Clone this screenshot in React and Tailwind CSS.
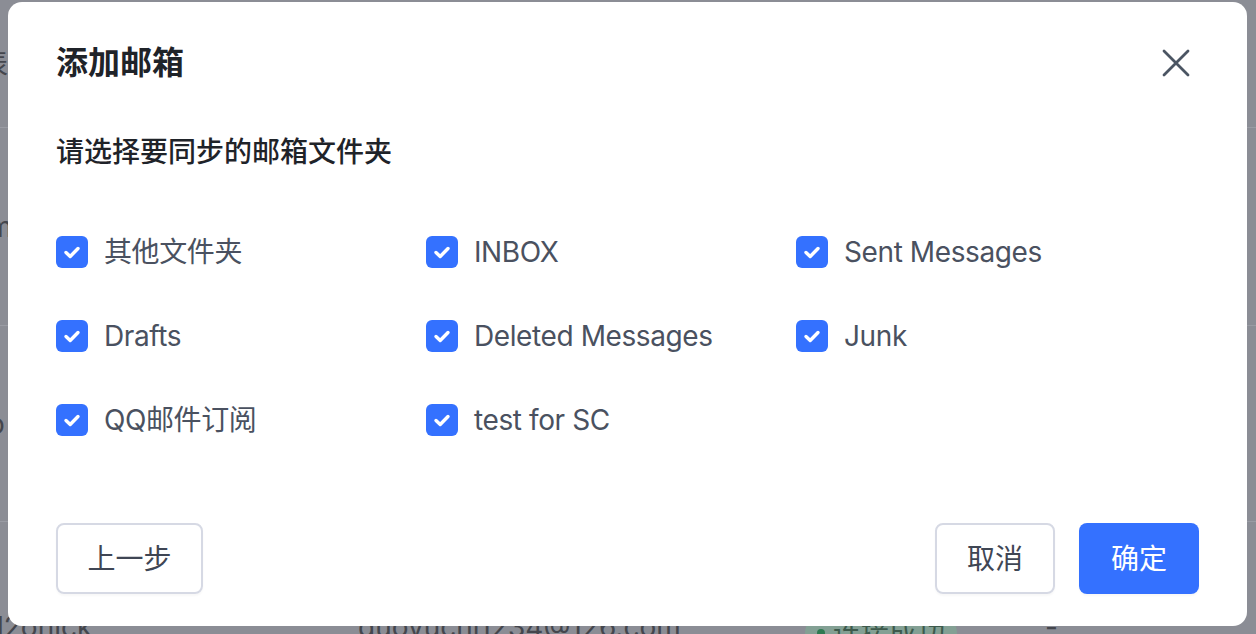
import React from "react";

const folders = [
  "其他文件夹",
  "INBOX",
  "Sent Messages",
  "Drafts",
  "Deleted Messages",
  "Junk",
  "QQ邮件订阅",
  "test for SC",
];

function Check() {
  return (
    <span className="w-8 h-8 rounded-[6px] bg-[#3471ff] flex items-center justify-center shrink-0">
      <svg width="32" height="32" viewBox="0 0 32 32" fill="none">
        <path d="M10 16.5l4.2 4L22 12.5" stroke="white" strokeWidth="3.4" strokeLinecap="round" strokeLinejoin="round" />
      </svg>
    </span>
  );
}

function BackgroundTable() {
  return (
    <div className="flex flex-col text-[28px] text-[#44464d]">
      <div className="h-[128px] border-b border-[#9a9ca4] flex items-center">
        <span className="-ml-[20px]">表</span>
      </div>
      <div className="h-[198px] border-b border-[#9a9ca4] flex items-center">
        <span className="-ml-[12px]">m</span>
      </div>
      <div className="h-[196px] border-b border-[#9a9ca4] flex items-center">
        <span className="-ml-[12px]">o</span>
      </div>
      <div className="h-[196px] flex items-start pt-[84px]">
        <span className="-ml-[3px] w-[361px]">l2onick</span>
        <span className="w-[447px]">guovuchi1234@126.com</span>
        <span className="w-[240px]">
          <span className="inline-flex items-center gap-2 px-3 h-[40px] rounded-full bg-[#83a094] text-[#3d5a4c]">
            <span className="w-2 h-2 rounded-full bg-[#2f7a52]" />
            连接成功
          </span>
        </span>
        <span>-</span>
      </div>
    </div>
  );
}

export default function App() {
  return (
    <div
      className="relative w-[1256px] h-[634px] overflow-hidden bg-[#8b8d95]"
      style={{ fontFamily: "Inter, 'Noto Sans CJK SC', sans-serif" }}
    >
      <BackgroundTable />

      <div className="absolute left-[8px] top-[2px] w-[1239px] h-[624px] bg-white rounded-[14px] px-12 flex flex-col">
        <div className="pt-[45px] flex items-center justify-between h-[77px]">
          <h1 className="text-[32px] leading-[32px] font-bold text-[#1f2329]">添加邮箱</h1>
          <button className="w-8 h-8 mr-[7px] flex items-center justify-center text-[#4b5563]">
            <svg width="28" height="28" viewBox="0 0 28 28" fill="none">
              <path d="M2 2L26 26M26 2L2 26" stroke="currentColor" strokeWidth="2.8" strokeLinecap="round" />
            </svg>
          </button>
        </div>

        <p className="mt-[53px] h-[40px] leading-[40px] text-[28px] font-medium text-[#1f2329]">
          请选择要同步的邮箱文件夹
        </p>

        <div className="mt-[38px] grid grid-cols-[370px_370px_370px]">
          {folders.map((f) => (
            <label key={f} className="h-[84px] flex items-center gap-4">
              <Check />
              <span className="text-[28px] tracking-[-0.4px] text-[#4a5160]">{f}</span>
            </label>
          ))}
        </div>

        <div className="mt-[61px] flex items-center justify-between">
          <button className="w-[147px] h-[71px] rounded-[8px] border-2 border-[#d6d9e4] text-[28px] text-[#3f4654] shadow-[0_2px_2px_rgba(0,0,0,0.03)]">
            上一步
          </button>
          <div className="flex gap-6">
            <button className="w-[120px] h-[71px] rounded-[8px] border-2 border-[#d6d9e4] text-[28px] text-[#3f4654] shadow-[0_2px_2px_rgba(0,0,0,0.03)]">
              取消
            </button>
            <button className="w-[120px] h-[71px] rounded-[8px] bg-[#3471ff] text-[28px] text-white shadow-[0_2px_2px_rgba(0,0,0,0.03)]">
              确定
            </button>
          </div>
        </div>
      </div>
    </div>
  );
}
